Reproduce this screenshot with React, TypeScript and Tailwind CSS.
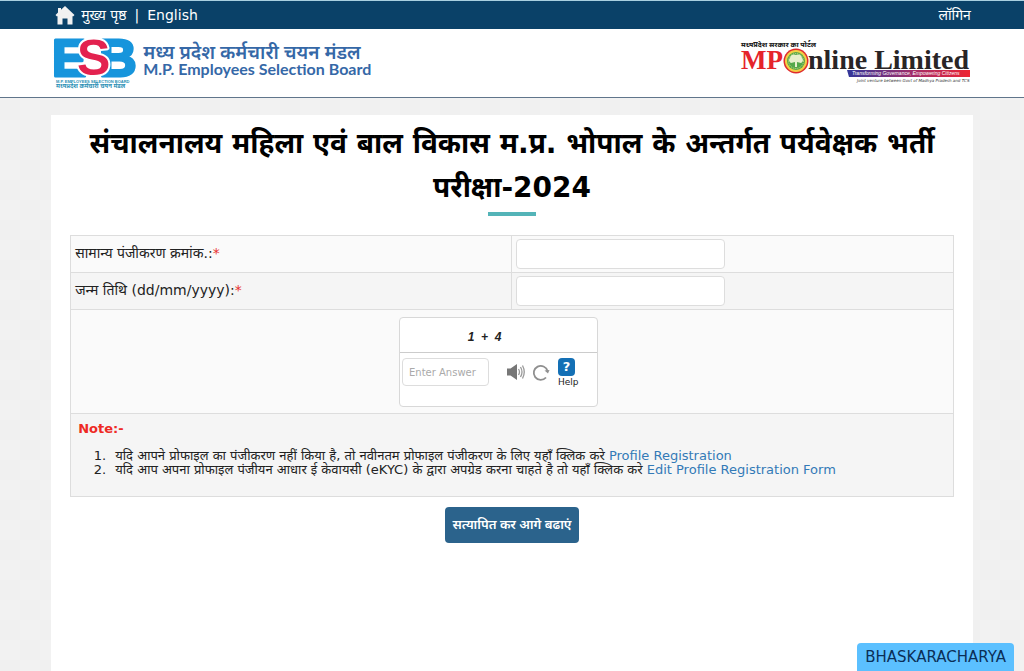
interface NoteItem {
  text: string;
  link: string;
}

const notes: NoteItem[] = [
  {
    text: "यदि आपने प्रोफाइल का पंजीकरण नहीं किया है, तो नवीनतम प्रोफाइल पंजीकरण के लिए यहाँ क्लिक करे",
    link: "Profile Registration",
  },
  {
    text: "यदि आप अपना प्रोफाइल पंजीयन आधार ई केवायसी (eKYC) के द्वारा अपग्रेड करना चाहते है तो यहाँ क्लिक करे",
    link: "Edit Profile Registration Form",
  },
];

function HomeIcon() {
  return (
    <svg viewBox="0 0 20 20" className="h-5 w-5" aria-hidden="true">
      <path d="M10 1 19.500 10l-1.500 1.500-.5-.4V19.500H12.500v-6h-5v6H2.500v-8.400l-.5.4L.5 10 3 7.600V3h3v1.800z" fill="#f1f1f1" />
    </svg>
  );
}

function EsbLogo() {
  return (
    <svg viewBox="0 0 86 54" className="h-[54px] w-[86px] overflow-visible" role="img" aria-label="ESB">
      <g fontFamily="Liberation Sans, Arial, sans-serif" fontWeight="700" fontSize="52" strokeLinejoin="round">
        <text x="-1" y="41" fill="#1795dc" stroke="#1795dc" strokeWidth="3">E</text>
        <text x="46" y="41" fill="#1795dc" stroke="#1795dc" strokeWidth="3">B</text>
        <text x="24" y="40" fontSize="50" fill="#e3224f" stroke="#ffffff" strokeWidth="4" paintOrder="stroke">S</text>
      </g>
      <text x="3" y="48" fontSize="4" fontFamily="Liberation Sans, sans-serif" fontWeight="700" fill="#2a8fb5">M.P. EMPLOYEES SELECTION BOARD</text>
      <text x="3" y="53" fontSize="6" fontFamily="Noto Sans, sans-serif" fontWeight="700" fill="#2a8fb5">मध्यप्रदेश कर्मचारी चयन मंडल</text>
    </svg>
  );
}

function MpOnlineLogo() {
  return (
    <svg viewBox="0 0 230 46" className="h-[46px] w-[230px] overflow-visible" role="img" aria-label="MPOnline Limited">
      <defs>
        <linearGradient id="ribbon">
          <stop offset="0" stopColor="#31369a" />
          <stop offset="0.55" stopColor="#a52d68" />
          <stop offset="1" stopColor="#ee2432" />
        </linearGradient>
      </defs>
      <text x="0" y="8" fontSize="7" fontFamily="Noto Sans, sans-serif" fontWeight="800" fill="#222222">मध्यप्रदेश सरकार का पोर्टल</text>
      <g fontFamily="Liberation Serif, serif" fontWeight="700">
        <text x="0" y="30" fontSize="27" fill="#e5242b">MP</text>
        <text x="67" y="30" fontSize="28" fill="#292526">nline Limited</text>
      </g>
      <circle cx="55" cy="22" r="12.500" fill="#df2b2d" />
      <circle cx="55" cy="22" r="11" fill="#f3cf45" />
      <circle cx="55" cy="22" r="9" fill="#55a84a" />
      <circle cx="55" cy="22" r="7.500" fill="none" stroke="#d6dc85" strokeWidth="1" strokeDasharray="1 1" />
      <path d="M54 28v-5l-4 1a3 3 0 0 1-1-5 4 4 0 0 1 6-3 4 4 0 0 1 6 3 3 3 0 0 1-1 5l-4-1v5z" fill="#e7efcc" />
      <path d="M106 31h123v7H108z" fill="url(#ribbon)" />
      <text x="111" y="36" fontSize="5" fontFamily="Liberation Sans, sans-serif" fontStyle="italic" fill="#ffffff">Transforming Governance, Empowering Citizens</text>
      <text x="116" y="43" fontSize="4" fontFamily="DejaVu Sans, sans-serif" fontStyle="italic" fill="#333333">Joint venture between Govt of Madhya Pradesh and TCS</text>
    </svg>
  );
}

function SpeakerIcon() {
  return (
    <svg viewBox="0 0 20 18" className="h-[18px] w-5" fill="none" aria-hidden="true">
      <path d="M1 5.500h3.500L11 1v16l-6.500-4.500H1z" fill="#777777" />
      <path d="M12.500 6q2 3 0 6M14.500 4q3 5 0 10M16.500 2.500q3.500 6.500 0 13" stroke="#999999" strokeWidth="1.300" />
    </svg>
  );
}

function RefreshIcon() {
  return (
    <svg viewBox="0 0 18 18" className="h-[18px] w-[18px]" fill="none" aria-hidden="true">
      <path d="M14 14.500A7 7 0 1 1 15.500 8" stroke="#8f8f8f" strokeWidth="1.800" />
      <path d="m12.500 7.500 5-.5-1.500 3.500z" fill="#8f8f8f" />
    </svg>
  );
}

function FieldRow({ id, label, className }: { id: string; label: string; className: string }) {
  return (
    <div className={`grid grid-cols-2 border-b border-[#dddddd] ${className}`}>
      <label htmlFor={id} className="border-r border-[#dddddd] px-1 pt-[7px] pb-[9px] text-sm leading-5">
        {label}
        <span className="text-[#e8312f]">*</span>
      </label>
      <div className="px-1 py-[3px]">
        <input id={id} type="text" className="block h-[30px] w-[209px] rounded border border-[#dddddd] bg-white px-2 text-sm" />
      </div>
    </div>
  );
}

function Captcha() {
  return (
    <div className="h-[90px] w-[199px] rounded border border-[#d8d8d8] bg-white">
      <div className="flex h-[35px] items-center justify-center border-b border-[#cccccc] pt-1 pr-7 font-['Liberation_Sans',sans-serif] text-xs font-bold whitespace-pre italic">
        {"1  +  4"}
      </div>
      <div className="flex items-start px-[2px] pt-[5px]">
        <input
          type="text"
          aria-label="Enter Answer"
          placeholder="Enter Answer"
          className="h-7 w-[87px] rounded border border-[#dddddd] px-[6px] text-[10px] placeholder:text-[#aaaaaa]"
        />
        <button type="button" aria-label="Play audio" className="mt-[5px] ml-[17px]">
          <SpeakerIcon />
        </button>
        <button type="button" aria-label="Refresh" className="mt-[5px] ml-[6px]">
          <RefreshIcon />
        </button>
        <a href="#help" className="ml-2 text-[9px] leading-3">
          <span className="flex h-[18px] w-[17px] items-center justify-center rounded bg-[#1470b5] text-[13px] font-bold text-white">?</span>
          Help
        </a>
      </div>
    </div>
  );
}

export default function App() {
  return (
    <div className="flex min-h-screen flex-col bg-[repeating-conic-gradient(#f0f0f0_0_25%,#f2f2f2_0_50%)] bg-[length:40px_40px] font-['DejaVu_Sans','Noto_Sans',sans-serif] text-[#222222]">
      {/* Top bar */}
      <nav className="flex h-[29px] items-center justify-between border-t border-[#a9cfe0] bg-[#0a4168] px-[5%] text-sm text-white">
        <div className="flex items-center pl-1">
          <a href="#home" className="flex items-center gap-[6px]">
            <HomeIcon />
            मुख्य पृष्ठ
          </a>
          <span className="px-2">|</span>
          <a href="#english">English</a>
        </div>
        <a href="#login" className="pr-[2px]">लॉगिन</a>
      </nav>

      {/* Logos */}
      <header className="flex h-[69px] justify-between border-b border-[#60758b] bg-white px-[5%]">
        <div className="flex items-start gap-1 pt-[6px] pl-[2px]">
          <EsbLogo />
          <div className="pt-2 text-[#3568a7]">
            <p className="font-['Noto_Sans',sans-serif] text-[19px] leading-[18px] font-semibold">मध्य प्रदेश कर्मचारी चयन मंडल</p>
            <p className="font-['Lato',sans-serif] text-base leading-4 font-bold">M.P. Employees Selection Board</p>
          </div>
        </div>
        <div className="pt-[10px] pr-[2px]">
          <MpOnlineLogo />
        </div>
      </header>

      <main className="mx-[5%] mt-[17px] flex-1 bg-white px-[19px]">
        <h1 className="pt-[7px] text-center text-[28px] leading-[44px] font-bold text-black">
          संचालनालय महिला एवं बाल विकास म.प्र. भोपाल के अन्तर्गत पर्यवेक्षक भर्ती परीक्षा-2024
        </h1>
        <div className="mx-auto mt-[2px] h-1 w-12 bg-[#54b4b8]" />

        <form>
          <div className="mt-[19px] border border-[#dddddd] bg-[#fafafa]">
            <FieldRow id="reg-no" label="सामान्य पंजीकरण क्रमांक.:" className="bg-[#fafafa]" />
            <FieldRow id="dob" label="जन्म तिथि (dd/mm/yyyy):" className="bg-[#f5f5f5]" />
            <div className="flex justify-center border-b border-[#dddddd] pt-[7px] pr-[27px] pb-[6px]">
              <Captcha />
            </div>
            <div className="bg-[#f5f5f5] px-[7px] pt-[5px] pb-[19px] text-[13px]">
              <h2 className="leading-5 font-bold text-[#ee2a24]">Note:-</h2>
              <ol className="mt-[10px] list-decimal pl-8 leading-[14px]">
                {notes.map((note) => (
                  <li key={note.link} className="pl-[5px]">
                    {note.text}{" "}
                    <a href="#profile" className="text-[#337ab7]">
                      {note.link}
                    </a>
                  </li>
                ))}
              </ol>
            </div>
          </div>
          <button type="submit" className="mx-auto mt-[10px] block h-9 rounded bg-[#2b638c] px-2 font-['Noto_Sans',sans-serif] text-[13px] font-semibold text-white">
            सत्यापित कर आगे बढाएं
          </button>
        </form>
      </main>

      <div className="fixed right-[10px] bottom-0 rounded-t bg-[#5bc0ff] px-2 py-1 text-[15px] leading-5 text-[#0b2f57]">
        BHASKARACHARYA
      </div>
    </div>
  );
}
